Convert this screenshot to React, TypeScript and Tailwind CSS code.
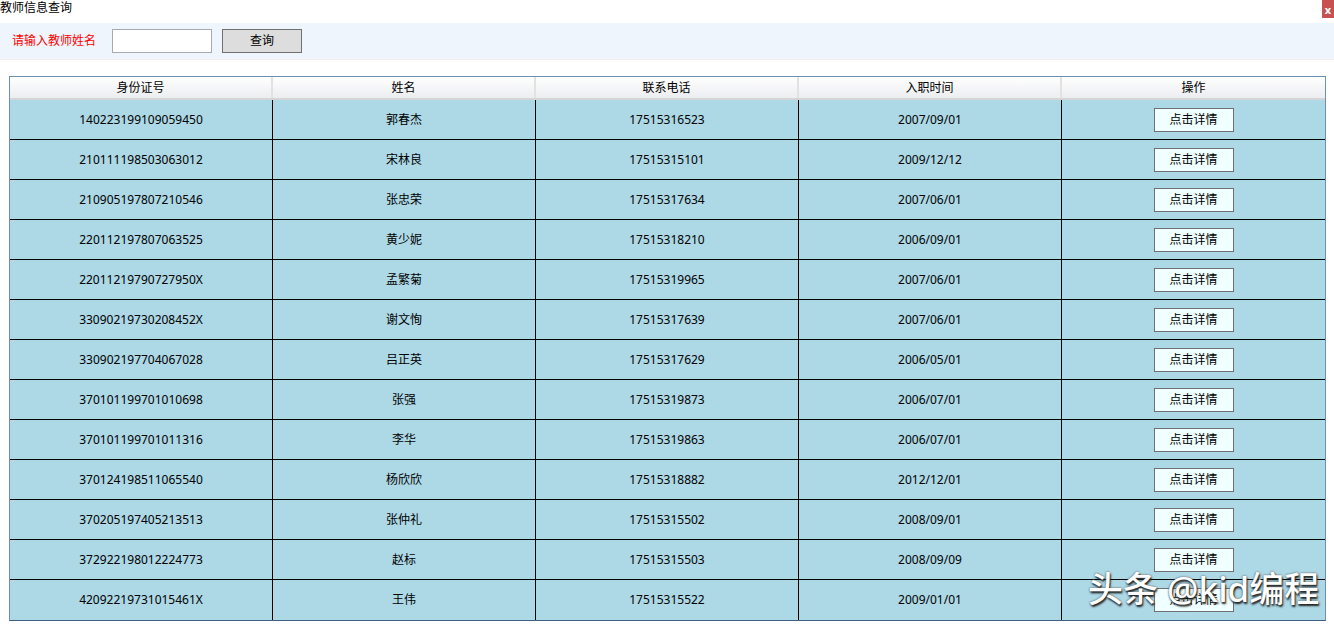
const rows = [
  ["140223199109059450", "郭春杰", "17515316523", "2007/09/01"],
  ["210111198503063012", "宋林良", "17515315101", "2009/12/12"],
  ["210905197807210546", "张忠荣", "17515317634", "2007/06/01"],
  ["220112197807063525", "黄少妮", "17515318210", "2006/09/01"],
  ["22011219790727950X", "孟繁菊", "17515319965", "2007/06/01"],
  ["33090219730208452X", "谢文恂", "17515317639", "2007/06/01"],
  ["330902197704067028", "吕正英", "17515317629", "2006/05/01"],
  ["370101199701010698", "张强", "17515319873", "2006/07/01"],
  ["370101199701011316", "李华", "17515319863", "2006/07/01"],
  ["370124198511065540", "杨欣欣", "17515318882", "2012/12/01"],
  ["370205197405213513", "张仲礼", "17515315502", "2008/09/01"],
  ["372922198012224773", "赵标", "17515315503", "2008/09/09"],
  ["42092219731015461X", "王伟", "17515315522", "2009/01/01"],
];

const headers = ["身份证号", "姓名", "联系电话", "入职时间", "操作"];

export default function App() {
  return (
    <div className="relative w-[1334px] h-[628px] overflow-hidden bg-white text-black font-['Noto_Sans','Noto_Sans_CJK_SC',sans-serif]">
      {/* window title */}
      <div className="flex h-[23px] items-start justify-between">
        <span className="text-[12px] leading-[16px]">教师信息查询</span>
        <div className="flex h-[18px] w-[12px] items-center justify-center bg-[#c75050] text-[11px] font-bold leading-none text-white">
          x
        </div>
      </div>

      {/* search bar */}
      <div className="flex h-[37px] items-center border-b border-[#f8eeee] bg-[#eef5fd] pl-[12px]">
        <span className="w-[100px] text-[12px] text-[#ff0000]">请输入教师姓名</span>
        <input className="h-[24px] w-[100px] border border-[#a9a9b0] bg-white outline-none" />
        <button className="ml-[10px] h-[24px] w-[80px] border border-[#707070] bg-[#dddddd] text-[12px]">
          查询
        </button>
      </div>

      {/* table */}
      <div className="ml-[9px] mt-[16px] w-[1317px] border border-[#6d8fb0] border-b-[#3d5f80]">
        <div className="grid h-[23px] grid-cols-5 border-b-2 border-[#d5d5d5] bg-gradient-to-b from-white to-[#ecedf0]">
          {headers.map((h, i) => (
            <div
              key={h}
              className={`flex items-center justify-center text-[12px] ${i < 4 ? "border-r-2 border-[#e2e2e2]" : ""}`}
            >
              {h}
            </div>
          ))}
        </div>
        {rows.map((r, ri) => (
          <div
            key={r[0]}
            className={`grid h-[40px] grid-cols-5 bg-[#add8e6] text-[12px] ${ri < rows.length - 1 ? "border-b border-black" : ""}`}
          >
            {r.map((c, ci) => (
              <div key={ci} className="flex items-center justify-center border-r border-black">
                {c}
              </div>
            ))}
            <div className="flex items-center justify-center">
              <button className="h-[24px] w-[80px] border border-[#707070] bg-[#f0ffff] text-[12px]">
                点击详情
              </button>
            </div>
          </div>
        ))}
      </div>

      {/* watermark */}
      <div className="absolute left-[1088px] top-[569px] text-[35px] font-medium leading-[40px] text-white [text-shadow:1px_2px_2px_#222,0_0_2px_#444]">
        头条 @kid编程
      </div>
    </div>
  );
}
